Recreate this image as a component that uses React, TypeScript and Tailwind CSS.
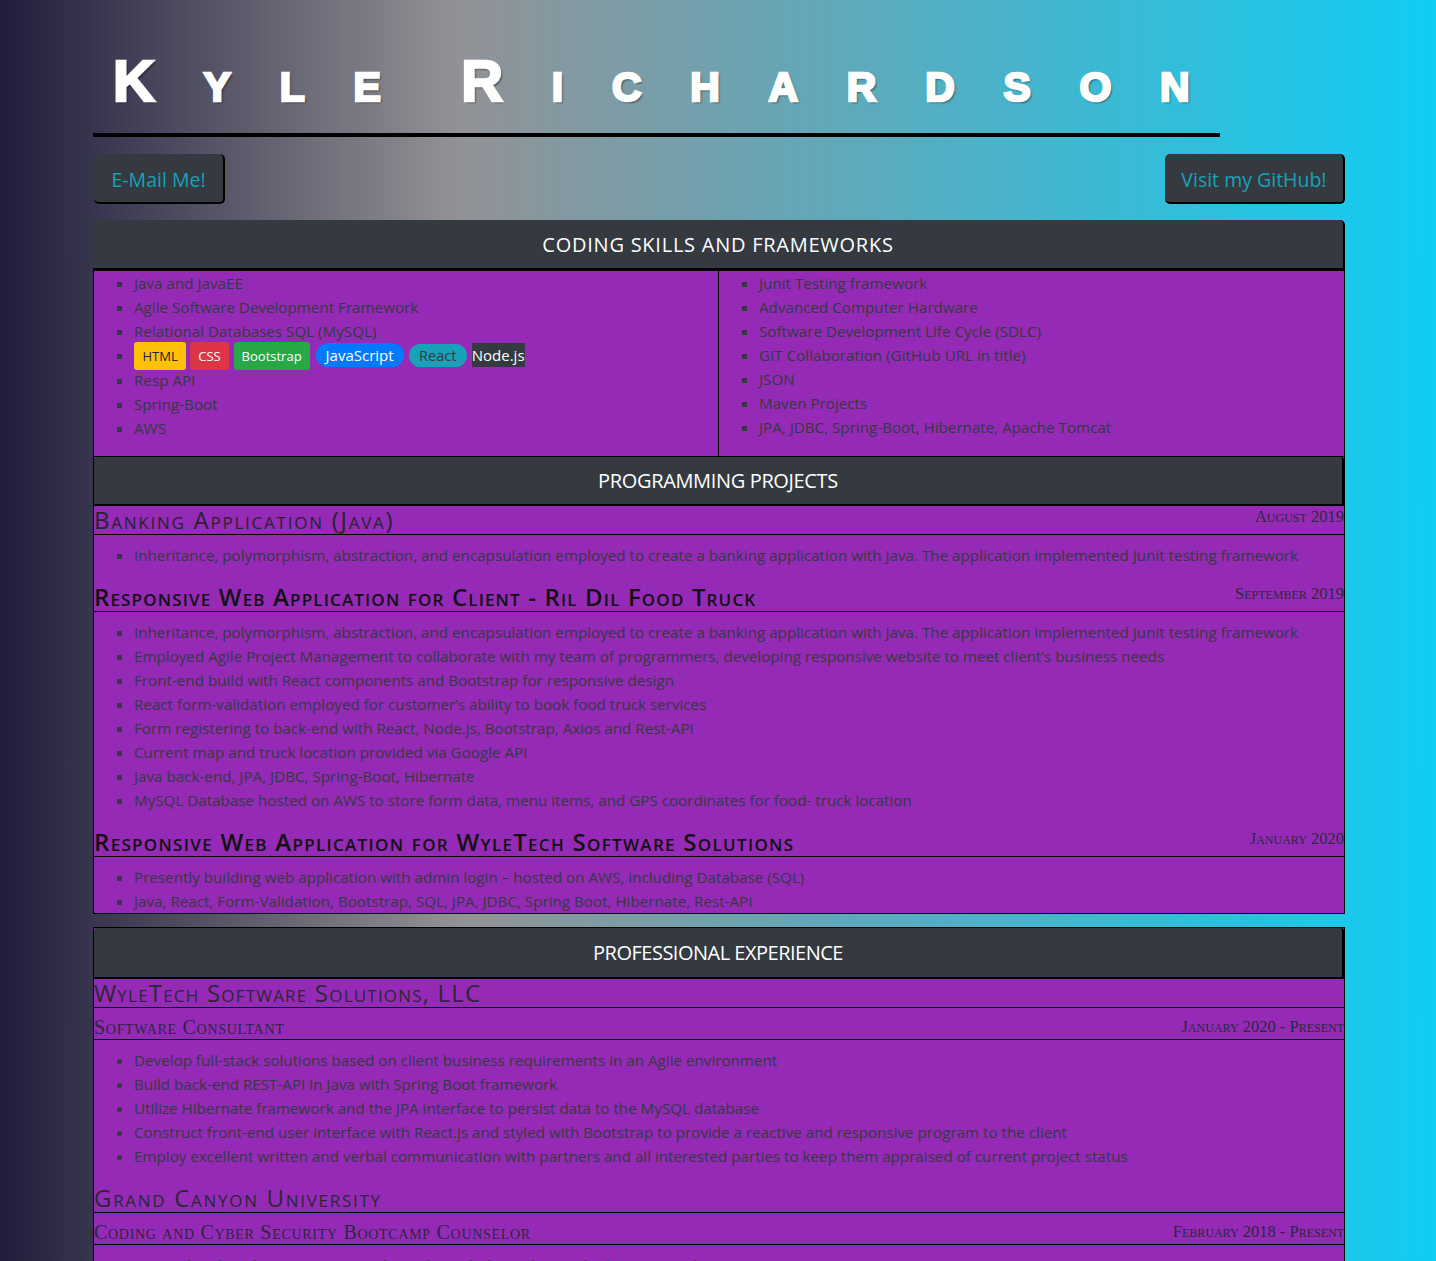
import React from "react";

const PURPLE = "bg-[#952ab6]";

function SectionHeader({
  children,
  rounded = true,
  textClass,
  heightClass = "h-[49px]",
}: {
  children: React.ReactNode;
  rounded?: boolean;
  textClass: string;
  heightClass?: string;
}) {
  return (
    <div
      className={`flex ${heightClass} items-center justify-center border-r-2 border-b-2 border-black bg-[#343a40] pt-[1px] text-[20px] text-white ${
        rounded ? "rounded-t-[5px]" : "rounded-t-[3px]"
      }`}
    >
      <span className={textClass}>{children}</span>
    </div>
  );
}

function Badge({ className, children }: { className: string; children: React.ReactNode }) {
  return <span className={className}>{children}</span>;
}

const leftSkills: React.ReactNode[] = [
  "Java and JavaEE",
  "Agile Software Development Framework",
  "Relational Databases SQL (MySQL)",
  <span key="b" className="whitespace-nowrap">
    <Badge className="rounded-[3px] bg-[#ffc107] px-[8.5px] py-[5px] text-[13px] text-[#212529]">HTML</Badge>{" "}
    <Badge className="rounded-[3px] bg-[#dc3545] px-[8px] py-[5px] text-[13px] text-white">CSS</Badge>{" "}
    <Badge className="ml-[1px] rounded-[3px] bg-[#28a745] px-[8px] py-[5px] text-[13px] text-white">Bootstrap</Badge>{" "}
    <Badge className="ml-[2px] rounded-full bg-[#007bff] px-[10px] py-[2px] text-[15px] text-white">JavaScript</Badge>{" "}
    <Badge className="ml-[1px] rounded-full bg-[#17a2b8] px-[10.5px] py-[2px] text-[14.5px] text-[#343a40]">React</Badge>{" "}
    <Badge className="ml-[1px] bg-[#343a40] py-[2px] text-[15px] text-white">Node.js</Badge>
  </span>,
  "Resp API",
  "Spring-Boot",
  "AWS",
];

const rightSkills = [
  "Junit Testing framework",
  "Advanced Computer Hardware",
  "Software Development Life Cycle (SDLC)",
  "GIT Collaboration (GitHub URL in title)",
  "JSON",
  "Maven Projects",
  "JPA, JDBC, Spring-Boot, Hibernate, Apache Tomcat",
];

const inheritance =
  "Inheritance, polymorphism, abstraction, and encapsulation employed to create a banking application with Java. The application implemented Junit testing framework";

const projects = [
  {
    title: "Banking Application (Java)",
    date: "August 2019",
    titleClass: "font-normal tracking-[1.75px] text-[#25232f]",
    items: [inheritance],
  },
  {
    title: "Responsive Web Application for Client - Ril Dil Food Truck",
    date: "September 2019",
    titleClass: "font-semibold tracking-[1.15px] text-[#111111]",
    items: [
      inheritance,
      "Employed Agile Project Management to collaborate with my team of programmers, developing responsive website to meet client’s business needs",
      "Front-end build with React components and Bootstrap for responsive design",
      "React form-validation employed for customer’s ability to book food truck services",
      "Form registering to back-end with React, Node.js, Bootstrap, Axios and Rest-API",
      "Current map and truck location provided via Google API",
      "Java back-end, JPA, JDBC, Spring-Boot, Hibernate",
      "MySQL Database hosted on AWS to store form data, menu items, and GPS coordinates for food- truck location",
    ],
  },
  {
    title: "Responsive Web Application for WyleTech Software Solutions",
    date: "January 2020",
    titleClass: "font-semibold tracking-[1.3px] text-[#111111]",
    items: [
      "Presently building web application with admin login – hosted on AWS, including Database (SQL)",
      "Java, React, Form-Validation, Bootstrap, SQL, JPA, JDBC, Spring Boot, Hibernate, Rest-API",
    ],
  },
];

const jobs = [
  {
    company: "WyleTech Software Solutions, LLC",
    companyClass: "tracking-[1.2px]",
    role: "Software Consultant",
    date: "January 2020 - Present",
    items: [
      "Develop full-stack solutions based on client business requirements in an Agile environment",
      "Build back-end REST-API in Java with Spring Boot framework",
      "Utilize Hibernate framework and the JPA interface to persist data to the MySQL database",
      "Construct front-end user interface with React.js and styled with Bootstrap to provide a reactive and responsive program to the client",
      "Employ excellent written and verbal communication with partners and all interested parties to keep them appraised of current project status",
    ],
  },
  {
    company: "Grand Canyon University",
    companyClass: "tracking-[1.7px]",
    role: "Coding and Cyber Security Bootcamp Counselor",
    date: "February 2018 - Present",
    items: [
      "Counsel and guide prospective students through the coding and cyber security bootcamp programs",
      "Communicate program requirements, schedules and career outcomes to students",
    ],
  },
];

const serifSC = "font-['Liberation_Serif','Times_New_Roman',serif] [font-variant:small-caps]";

export default function App() {
  return (
    <div className="min-h-screen w-full bg-[linear-gradient(to_right,#211e3c_0%,#929296_32%,#10cdf3_100%)] font-['Open_Sans',sans-serif] text-[15.2px] leading-[24px] text-[#343a40]">
      <div className="ml-[93px] w-[1252px] pb-[40px]">
        <h1 className="w-[90%] whitespace-nowrap border-b-4 border-black pt-[41px] pb-[12px] pl-[20px] font-['Liberation_Sans',Arial,sans-serif] text-[58px] font-bold leading-[80px] tracking-[48.7px] text-white [-webkit-text-stroke:2.5px_white] [font-variant:small-caps] [text-shadow:2px_2px_2px_rgba(0,0,0,0.45)] [word-spacing:-33px]">
          Kyle Richardson
        </h1>

        <div className="mt-[17px] flex justify-between">
          <button className="ml-[1px] h-[50px] rounded-[5px] border-r-2 border-b-2 border-black bg-[#343a40] px-[17.5px] pt-[3px] text-[19.5px] text-[#17a2b8]">
            E-Mail Me!
          </button>
          <button className="h-[50px] rounded-[5px] border-r-2 border-b-2 border-black bg-[#343a40] px-[16.5px] pt-[3px] text-[19.5px] text-[#17a2b8]">
            Visit my GitHub!
          </button>
        </div>

        <div className="mt-[16px]">
          <SectionHeader textClass="tracking-[0.75px]" heightClass="h-[50px]">
            CODING SKILLS AND FRAMEWORKS
          </SectionHeader>
          <div className={`grid grid-cols-2 border border-black ${PURPLE}`}>
            <div className="border-r border-black">
              <ul className="mb-[16px] list-[square] pl-[40px]">
                {leftSkills.map((s, i) => (
                  <li key={i}>{s}</li>
                ))}
              </ul>
            </div>
            <div>
              <ul className="mb-[16px] list-[square] pl-[40px]">
                {rightSkills.map((s, i) => (
                  <li key={i}>{s}</li>
                ))}
              </ul>
            </div>
          </div>

          <div className={`border-x border-b border-black ${PURPLE}`}>
            <SectionHeader rounded={false} textClass="tracking-[-0.35px]">
              PROGRAMMING PROJECTS
            </SectionHeader>
            {projects.map((p, idx) => (
              <div key={idx}>
                <div className="flex items-start justify-between border-b border-black">
                  <h3 className={`text-[24px] leading-[28px] [font-variant:small-caps] ${p.titleClass}`}>{p.title}</h3>
                  <span className={`${serifSC} text-[16.5px] leading-[22px] text-[#2b2b3a]`}>{p.date}</span>
                </div>
                <ul className={`mt-[8px] list-[square] pl-[40px] ${idx === projects.length - 1 ? "mb-0" : "mb-[16px]"}`}>
                  {p.items.map((it, i) => (
                    <li key={i}>{it}</li>
                  ))}
                </ul>
              </div>
            ))}
          </div>
        </div>

        <div className={`mt-[13px] border border-black ${PURPLE}`}>
          <SectionHeader rounded={false} textClass="tracking-[-0.5px]" heightClass="h-[51px]">
            PROFESSIONAL EXPERIENCE
          </SectionHeader>
          {jobs.map((j, idx) => (
            <div key={idx}>
              <div className="border-b border-black">
                <h3 className={`text-[24px] leading-[28px] text-[#2a2833] [font-variant:small-caps] ${j.companyClass}`}>
                  {j.company}
                </h3>
              </div>
              <div className="flex h-[32px] items-end justify-between border-b border-black">
                <span className={`${serifSC} text-[20px] leading-[24px] tracking-[0.7px] text-[#2a2740]`}>{j.role}</span>
                <span className={`${serifSC} text-[16.5px] leading-[24px] text-[#2a2740]`}>{j.date}</span>
              </div>
              <ul className="mt-[8px] mb-[16px] list-disc pl-[40px]">
                {j.items.map((it, i) => (
                  <li key={i}>{it}</li>
                ))}
              </ul>
            </div>
          ))}
        </div>
      </div>
    </div>
  );
}
